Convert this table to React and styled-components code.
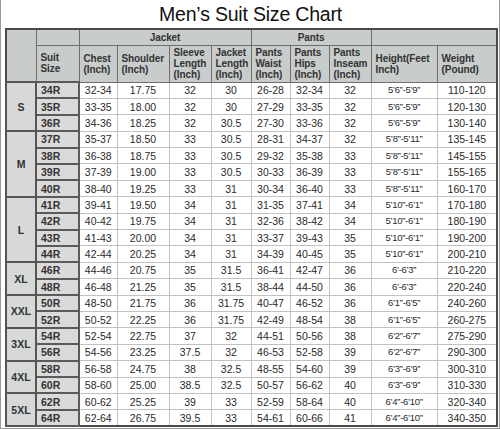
import styled, { createGlobalStyle } from "styled-components";

const GlobalStyle = createGlobalStyle`
  html, body {
    margin: 0;
    padding: 0;
    background: #ffffff;
  }
  body {
    font-family: "Liberation Sans", Arial, sans-serif;
  }
`;

const groups = [
  {
    size: "S",
    rows: [
      ["34R", "32-34", "17.75", "32", "30", "26-28", "32-34", "32", "5’6”-5’9”", "110-120"],
      ["35R", "33-35", "18.00", "32", "30", "27-29", "33-35", "32", "5’6”-5’9”", "120-130"],
      ["36R", "34-36", "18.25", "32", "30.5", "27-30", "33-36", "32", "5’6”-5’9”", "130-140"],
    ],
  },
  {
    size: "M",
    rows: [
      ["37R", "35-37", "18.50", "33", "30.5", "28-31", "34-37", "32", "5’8”-5’11”", "135-145"],
      ["38R", "36-38", "18.75", "33", "30.5", "29-32", "35-38", "33", "5’8”-5’11”", "145-155"],
      ["39R", "37-39", "19.00", "33", "30.5", "30-33", "36-39", "33", "5’8”-5’11”", "155-165"],
      ["40R", "38-40", "19.25", "33", "31", "30-34", "36-40", "33", "5’8”-5’11”", "160-170"],
    ],
  },
  {
    size: "L",
    rows: [
      ["41R", "39-41", "19.50", "34", "31", "31-35", "37-41", "34", "5’10”-6’1”", "170-180"],
      ["42R", "40-42", "19.75", "34", "31", "32-36", "38-42", "34", "5’10”-6’1”", "180-190"],
      ["43R", "41-43", "20.00", "34", "31", "33-37", "39-43", "35", "5’10”-6’1”", "190-200"],
      ["44R", "42-44", "20.25", "34", "31", "34-39", "40-45", "35", "5’10”-6’1”", "200-210"],
    ],
  },
  {
    size: "XL",
    rows: [
      ["46R", "44-46", "20.75", "35", "31.5", "36-41", "42-47", "36", "6’-6’3”", "210-220"],
      ["48R", "46-48", "21.25", "35", "31.5", "38-44", "44-50", "36", "6’-6’3”", "220-240"],
    ],
  },
  {
    size: "XXL",
    rows: [
      ["50R", "48-50", "21.75", "36", "31.75", "40-47", "46-52", "36", "6’1”-6’5”", "240-260"],
      ["52R", "50-52", "22.25", "36", "31.75", "42-49", "48-54", "38", "6’1”-6’5”", "260-275"],
    ],
  },
  {
    size: "3XL",
    rows: [
      ["54R", "52-54", "22.75", "37", "32", "44-51", "50-56", "38", "6’2”-6’7”", "275-290"],
      ["56R", "54-56", "23.25", "37.5", "32", "46-53", "52-58", "39", "6’2”-6’7”", "290-300"],
    ],
  },
  {
    size: "4XL",
    rows: [
      ["58R", "56-58", "24.75", "38", "32.5", "48-55", "54-60", "39", "6’3”-6’9”", "300-310"],
      ["60R", "58-60", "25.00", "38.5", "32.5", "50-57", "56-62", "40", "6’3”-6’9”", "310-330"],
    ],
  },
  {
    size: "5XL",
    rows: [
      ["62R", "60-62", "25.25", "39", "33", "52-59", "58-64", "40", "6’4”-6’10”", "320-340"],
      ["64R", "62-64", "26.75", "39.5", "33", "54-61", "60-66", "41", "6’4”-6’10”", "340-350"],
    ],
  },
];

const colWidths = [30, 43, 38, 52, 42, 40, 39, 39, 42, 66, 60];

const headers = [
  ["Chest", "(Inch)"],
  ["Shoulder", "(Inch)"],
  ["Sleeve", "Length", "(Inch)"],
  ["Jacket", "Length", "(Inch)"],
  ["Pants", "Waist", "(Inch)"],
  ["Pants", "Hips", "(Inch)"],
  ["Pants", "Inseam", "(Inch)"],
  ["Height(Feet", "Inch)"],
  ["Weight", "(Pound)"],
];

const App = () => {
  return (
    <Page>
      <GlobalStyle />
      <Title>Men’s Suit Size Chart</Title>
      <Chart>
        <colgroup>
          {colWidths.map((w, i) => (
            <col key={`col-${i}`} style={{ width: w }} />
          ))}
        </colgroup>
        <thead>
          <GroupRow>
            <HeadCell rowSpan={2} />
            <HeadCell />
            <GroupCell colSpan={4}>Jacket</GroupCell>
            <GroupCell colSpan={3}>Pants</GroupCell>
            <GroupCell colSpan={2} />
          </GroupRow>
          <LabelRow>
            <HeadCell>
              Suit
              <br />
              Size
            </HeadCell>
            {headers.map((lines, i) => (
              <HeadCell key={`h-${i}`}>
                {lines.map((line, j) => (
                  <span key={`l-${j}`}>
                    {line}
                    {j < lines.length - 1 && <br />}
                  </span>
                ))}
              </HeadCell>
            ))}
          </LabelRow>
        </thead>
        <tbody>
          {groups.map((group) =>
            group.rows.map((row, index) => (
              <DataRow key={row[0]}>
                {index === 0 && (
                  <SizeCell rowSpan={group.rows.length}>{group.size}</SizeCell>
                )}
                <SuitCell>{row[0]}</SuitCell>
                {row.slice(1).map((value, i) => (
                  <ValueCell key={`v-${i}`} $narrow={i === 7}>
                    {value}
                  </ValueCell>
                ))}
              </DataRow>
            ))
          )}
        </tbody>
      </Chart>
    </Page>
  );
};

export default App;

const Page = styled.div`
  width: 500px;
  height: 429px;
  box-sizing: border-box;
  border-left: 1px solid #9a9a9a;
  border-right: 1px solid #9a9a9a;
  border-bottom: 1px solid #9a9a9a;
  padding: 0 3px 0 4px;
  display: flex;
  flex-direction: column;
  overflow: hidden;
`;

const Title = styled.h1`
  margin: 0;
  height: 28px;
  display: flex;
  align-items: center;
  justify-content: center;
  font-family: "Liberation Sans", Arial, sans-serif;
  font-weight: normal;
  font-size: 19.5px;
  color: #111;
  letter-spacing: -0.2px;
`;

const Chart = styled.table`
  width: 491px;
  border-collapse: collapse;
  table-layout: fixed;
  border: 2px solid #4a4a4a;
  font-family: "Liberation Sans", Arial, sans-serif;
  color: #2a2a2a;
`;

const GroupRow = styled.tr`
  height: 16px;
`;

const LabelRow = styled.tr`
  height: 37px;
`;

const DataRow = styled.tr`
  height: 16.4px;
`;

const HeadCell = styled.th`
  background: #c8cccb;
  border: 1px solid #6f6f6f;
  font-size: 10px;
  line-height: 11px;
  font-weight: bold;
  color: #333;
  text-align: left;
  vertical-align: middle;
  padding: 0 2px 0 4px;
  letter-spacing: -0.1px;
`;

const GroupCell = styled(HeadCell)`
  text-align: center;
  padding: 0;
`;

const SizeCell = styled.td`
  background: #d7d9d9;
  border: 2px solid #555;
  font-size: 10.5px;
  font-weight: bold;
  color: #333;
  text-align: center;
  vertical-align: middle;
  padding: 0;
`;

const SuitCell = styled.td`
  background: #dadada;
  border: 2px solid #5a5a5a;
  font-size: 10.5px;
  font-weight: bold;
  color: #333;
  padding: 0 0 0 4px;
  line-height: 12px;
`;

const ValueCell = styled.td`
  background: #ffffff;
  border: 1px solid #c2c2c2;
  font-size: ${(props) => (props.$narrow ? "9.5px" : "10.5px")};
  letter-spacing: ${(props) => (props.$narrow ? "-0.3px" : "0")};
  text-align: center;
  padding: 0;
  line-height: 12px;
  color: #2a2a2a;
`;
